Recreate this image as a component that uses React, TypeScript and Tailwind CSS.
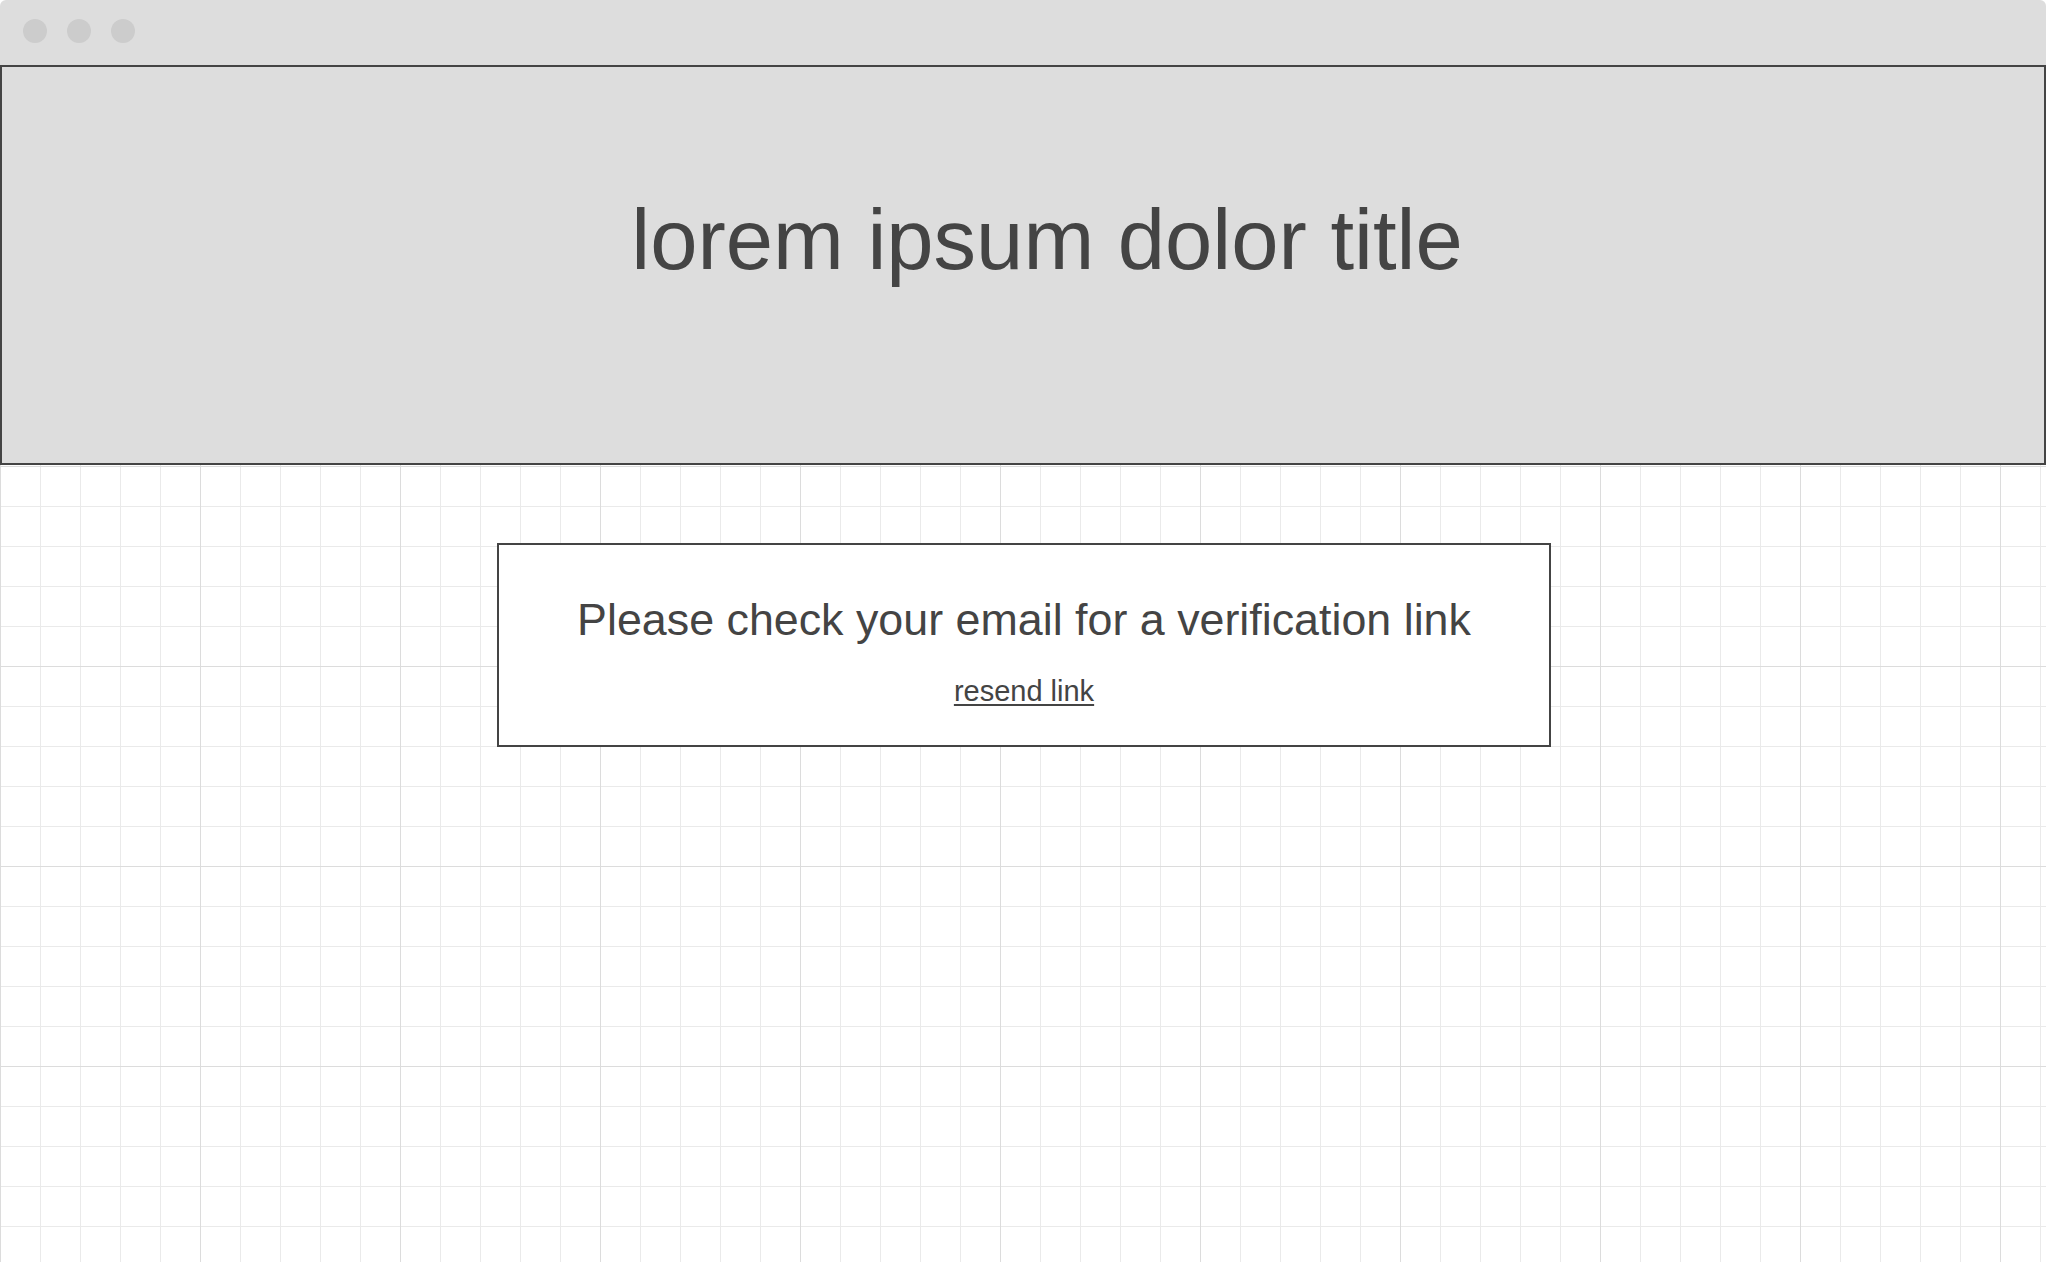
export default function App() {
  return (
    <div className="min-h-screen w-full bg-white font-['Liberation_Sans',Arial,sans-serif] text-[#444444]">
      <div className="flex h-[65px] gap-[20px] rounded-t-md bg-[#dddddd] pl-[23px] pt-[19px]">
        <span className="h-6 w-6 rounded-full bg-[#cccccc]" />
        <span className="h-6 w-6 rounded-full bg-[#cccccc]" />
        <span className="h-6 w-6 rounded-full bg-[#cccccc]" />
      </div>
      <div className="min-h-[1197px] bg-[linear-gradient(to_right,#dcdcdc_1.5px,transparent_1.5px),linear-gradient(to_bottom,#dcdcdc_1.5px,transparent_1.5px),linear-gradient(to_right,#eaeaea_1.5px,transparent_1.5px),linear-gradient(to_bottom,#eaeaea_1.5px,transparent_1.5px)] bg-[size:200px_200px,200px_200px,40px_40px,40px_40px] bg-[position:0_1px]">
        <header className="flex h-[400px] justify-center border-2 border-[#444444] bg-[#dddddd] pl-[48px] pt-[130px]">
          <h1 className="text-[85px] leading-none">lorem ipsum dolor title</h1>
        </header>
        <main className="flex justify-center pl-[2px] pt-[78px]">
          <section className="flex h-[204px] w-[1054px] flex-col items-center border-2 border-[#444444] bg-white pt-[52px]">
            <p className="text-[44.8px] leading-none">Please check your email for a verification link</p>
            <a href="#" className="mt-[35px] text-[29px] leading-none underline decoration-2 underline-offset-[3px]">
              resend link
            </a>
          </section>
        </main>
      </div>
    </div>
  );
}
